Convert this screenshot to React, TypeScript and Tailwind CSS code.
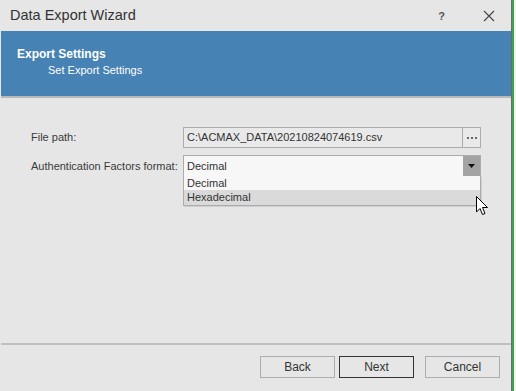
import React from "react";

export default function App() {
  return (
    <div
      className="flex w-[516px] h-[391px] overflow-hidden bg-[#f0f0f0]"
      style={{ fontFamily: '"Liberation Sans", Arial, sans-serif' }}
    >
      <div className="flex flex-col w-[511px] h-full bg-[#e6e6e6] text-[#333]">
        {/* Title bar */}
        <div className="flex items-center h-[31px] pl-[10px] pr-[16px] shrink-0">
          <span className="text-[14.5px] leading-none text-[#333] whitespace-nowrap">Data Export Wizard</span>
          <div className="flex-1" />
          <span className="text-[11px] font-bold text-[#555] mr-[38px] mt-[2px]">?</span>
          <svg width="12" height="12" viewBox="0 0 12 12" className="mt-[1px]">
            <path d="M1 1 L11 11 M11 1 L1 11" stroke="#444" strokeWidth="1.1" />
          </svg>
        </div>
        {/* Banner */}
        <div className="ml-[1px] h-[65px] bg-[#4682b4] border-b-2 border-[#b9b9b9] box-content shrink-0 text-white">
          <div className="pl-[16px] pt-[15px] text-[12px] font-bold leading-[16px] whitespace-nowrap">Export Settings</div>
          <div className="pl-[47px] text-[11px] leading-[16px] whitespace-nowrap">Set Export Settings</div>
        </div>
        {/* Content */}
        <div className="flex-1 relative pt-[29px] pl-[31px] text-[11px] text-[#3a3a3a]">
          <div className="grid grid-cols-[152px_298px] gap-y-[7px] items-center">
            <span className="leading-none whitespace-nowrap">File path:</span>
            <div className="flex h-[21px] border border-[#acacac] bg-[#e9e9e9]">
              <span className="flex-1 flex items-center pl-[3px] text-[#333] whitespace-nowrap leading-none">C:\ACMAX_DATA\20210824074619.csv</span>
              <span className="w-[18px] border-l border-[#acacac] flex items-center justify-center gap-[2px]">
                <span className="w-[2px] h-[2px] bg-[#666]" />
                <span className="w-[2px] h-[2px] bg-[#666]" />
                <span className="w-[2px] h-[2px] bg-[#666]" />
              </span>
            </div>
            <span className="leading-none whitespace-nowrap">Authentication Factors format:</span>
            <div className="relative">
              <div className="flex h-[22px] border border-[#acacac] bg-[#f7f7f7]">
                <span className="flex-1 flex items-center pl-[3px] text-[#333] leading-none">Decimal</span>
                <span className="w-[17px] bg-[#a3a3a3] flex items-center justify-center">
                  <svg width="7" height="4" viewBox="0 0 7 4">
                    <path d="M0 0 H7 L3.5 4 Z" fill="#111" />
                  </svg>
                </span>
              </div>
              <div className="absolute left-0 top-[21px] w-[298px] border border-[#acacac] border-t-0 bg-[#f7f7f7] shadow-[1px_1px_0_#cfcfcf] z-10">
                <div className="h-[14px] pl-[3px] flex items-center leading-none text-[#333]">Decimal</div>
                <div className="h-[15px] pl-[3px] flex items-center leading-none bg-[#dadada] text-[#333]">Hexadecimal</div>
              </div>
            </div>
          </div>
          {/* Mouse cursor */}
          <svg
            className="absolute left-[476px] top-[98px] z-20"
            width="13"
            height="20"
            viewBox="0 0 13 20"
          >
            <path
              d="M0.5 0.5 L0.5 16 L4 12.5 L6.5 18.5 L9 17.5 L6.5 11.5 L11.5 11.5 Z"
              fill="#fff"
              stroke="#000"
              strokeWidth="1"
              strokeLinejoin="round"
            />
          </svg>
        </div>
        {/* Footer */}
        <div className="ml-[1px] border-t-2 border-[#c0c0c0] h-[48px] shrink-0 flex justify-end items-start pt-[11px] pr-[11px] text-[12px] text-[#333]">
          <button className="w-[75px] h-[22px] border border-[#adadad] bg-[#e6e6e6] leading-none">Back</button>
          <button className="w-[75px] h-[22px] ml-[4px] border border-[#333] bg-[#e6e6e6] leading-none">Next</button>
          <button className="w-[75px] h-[22px] ml-[11px] border border-[#adadad] bg-[#e6e6e6] leading-none">Cancel</button>
        </div>
      </div>
      <div className="w-[1px] h-full bg-[#6b6b6b]" />
      <div className="w-[2px] h-full bg-[#3fa34d]" />
      <div className="w-[2px] h-full bg-[#f2f2f2]" />
    </div>
  );
}
